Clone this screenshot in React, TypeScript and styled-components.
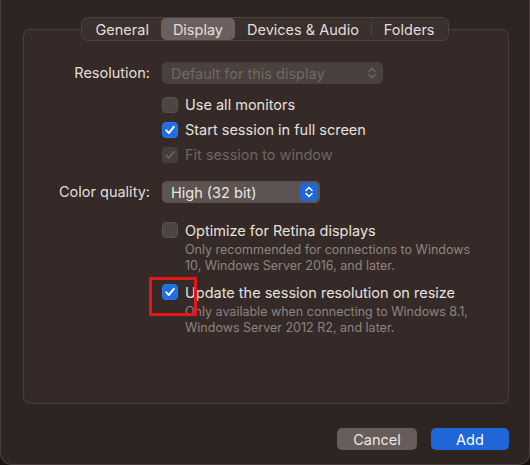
import React from "react";
import styled, { createGlobalStyle } from "styled-components";

const Global = createGlobalStyle`
  html, body { margin: 0; padding: 0; background: #1a1312; }
  body { font-family: Inter, "Noto Sans", sans-serif; -webkit-font-smoothing: antialiased; }
  #root { width: 530px; height: 465px; }
`;

const Window = styled.div`
  box-sizing: border-box;
  width: 530px;
  height: 465px;
  background: #2e2421;
  border: 1px solid #4a3f3c;
  border-top: none;
  border-radius: 0 0 12px 12px;
  padding: 17px 20px 14px 22px;
  display: flex;
  flex-direction: column;
`;

const Tabs = styled.div`
  align-self: center;
  position: relative;
  z-index: 1;
  display: flex;
  align-items: center;
  height: 24px;
  box-sizing: border-box;
  padding: 0 1px;
  background: #3a302d;
  border: 1px solid #4d4340;
  border-radius: 7px;
  margin-left: -2px;
`;

const Tab = styled.div<{ $active?: boolean }>`
  height: 22px;
  display: flex;
  align-items: center;
  padding: 0 12px;
  border-radius: 5px;
  font-size: 14.5px;
  color: #e4dedc;
  background: ${(p) => (p.$active ? "#6b605d" : "transparent")};
`;

const TabSep = styled.div`
  width: 1px;
  height: 14px;
  background: #4d4340;
`;

const Panel = styled.div`
  box-sizing: border-box;
  height: 375px;
  margin-top: -12px;
  background: #352a27;
  border: 1px solid #4a3f3c;
  border-radius: 7px;
  padding-top: 32px;
`;

const Form = styled.div`
  display: grid;
  grid-template-columns: 126px 1fr;
  column-gap: 12px;
  align-items: start;
`;

const Label = styled.div<{ $mt?: number }>`
  grid-column: 1;
  text-align: right;
  font-size: 14.5px;
  line-height: 22px;
  color: #e4dedc;
  margin-top: ${(p) => p.$mt ?? 0}px;
`;

const Control = styled.div<{ $mt?: number }>`
  grid-column: 2;
  margin-top: ${(p) => p.$mt ?? 0}px;
`;

const Popup = styled.div<{ $width: number; $disabled?: boolean }>`
  box-sizing: border-box;
  width: ${(p) => p.$width}px;
  height: 22px;
  border-radius: 5px;
  background: ${(p) => (p.$disabled ? "#4a403d" : "#5d5350")};
  color: ${(p) => (p.$disabled ? "#716865" : "#ebe6e4")};
  font-size: 14.5px;
  display: flex;
  align-items: center;
  justify-content: space-between;
  padding: 0 2px 0 9px;
`;

const Stepper = styled.div<{ $blue?: boolean }>`
  width: 18px;
  height: 18px;
  border-radius: 4px;
  background: ${(p) => (p.$blue ? "#1f66d9" : "transparent")};
  display: flex;
  align-items: center;
  justify-content: center;
`;

const CheckRow = styled.div<{ $disabled?: boolean }>`
  height: 25px;
  display: flex;
  align-items: center;
  gap: 7px;
  font-size: 14.5px;
  color: ${(p) => (p.$disabled ? "#6f6663" : "#e6e1df")};
`;

const OptionTitle = styled(CheckRow)`
  height: 20px;
`;

const Box = styled.div<{ $state: "off" | "on" | "dim" }>`
  position: relative;
  box-sizing: border-box;
  width: 16px;
  height: 16px;
  flex: none;
  border-radius: 4px;
  display: flex;
  align-items: center;
  justify-content: center;
  background: ${(p) =>
    p.$state === "on" ? "#1f6fe3" : p.$state === "dim" ? "#463c39" : "#4e4542"};
  border: 1px solid
    ${(p) => (p.$state === "on" ? "#2b78e8" : p.$state === "dim" ? "#4c423f" : "#5a504d")};
`;

const Desc = styled.div`
  margin-top: 2px;
  padding-left: 23px;
  font-size: 12.5px;
  line-height: 16px;
  color: #8e8481;
`;

const Highlight = styled.div`
  position: absolute;
  left: -14px;
  top: -8px;
  width: 48px;
  height: 39px;
  box-sizing: border-box;
  border: 3px solid #e3161c;
`;

const Footer = styled.div`
  margin-top: 24px;
  display: flex;
  justify-content: flex-end;
  gap: 14px;
`;

const Button = styled.div<{ $primary?: boolean; $width: number }>`
  width: ${(p) => p.$width}px;
  height: 22px;
  border-radius: 5px;
  display: flex;
  align-items: center;
  justify-content: center;
  font-size: 14.5px;
  color: ${(p) => (p.$primary ? "#ffffff" : "#ece7e5")};
  background: ${(p) => (p.$primary ? "#1f66d9" : "#675d5a")};
`;

const Chevrons = ({ color }: { color: string }) => (
  <svg width="10" height="14" viewBox="0 0 10 14">
    <path d="M2 5.5 L5 2.5 L8 5.5" fill="none" stroke={color} strokeWidth="1.5" strokeLinecap="round" strokeLinejoin="round" />
    <path d="M2 8.5 L5 11.5 L8 8.5" fill="none" stroke={color} strokeWidth="1.5" strokeLinecap="round" strokeLinejoin="round" />
  </svg>
);

const Check = ({ color }: { color: string }) => (
  <svg width="12" height="12" viewBox="0 0 12 12">
    <path d="M2.3 6.4 L4.9 9 L9.8 2.8" fill="none" stroke={color} strokeWidth="2" strokeLinecap="round" strokeLinejoin="round" />
  </svg>
);

const Checkbox = ({ state, children }: { state: "off" | "on" | "dim"; children?: React.ReactNode }) => (
  <Box $state={state}>
    {state === "on" && <Check color="#ffffff" />}
    {state === "dim" && <Check color="#6a615e" />}
    {children}
  </Box>
);

export default function App() {
  return (
    <>
      <Global />
      <Window>
        <Tabs>
          <Tab>General</Tab>
          <Tab $active>Display</Tab>
          <Tab>Devices &amp; Audio</Tab>
          <TabSep />
          <Tab>Folders</Tab>
        </Tabs>
        <Panel>
          <Form>
            <Label>Resolution:</Label>
            <Control>
              <Popup $width={221} $disabled>
                <span>Default for this display</span>
                <Stepper>
                  <Chevrons color="#6f6663" />
                </Stepper>
              </Popup>
            </Control>

            <Control $mt={8}>
              <CheckRow>
                <Checkbox state="off" />
                <span>Use all monitors</span>
              </CheckRow>
              <CheckRow>
                <Checkbox state="on" />
                <span>Start session in full screen</span>
              </CheckRow>
              <CheckRow $disabled>
                <Checkbox state="dim" />
                <span>Fit session to window</span>
              </CheckRow>
            </Control>

            <Label $mt={14}>Color quality:</Label>
            <Control $mt={14}>
              <Popup $width={158}>
                <span>High (32 bit)</span>
                <Stepper $blue>
                  <Chevrons color="#ffffff" />
                </Stepper>
              </Popup>
            </Control>

            <Control $mt={17}>
              <OptionTitle>
                <Checkbox state="off" />
                <span>Optimize for Retina displays</span>
              </OptionTitle>
              <Desc>
                Only recommended for connections to Windows
                <br />
                10, Windows Server 2016, and later.
              </Desc>
            </Control>

            <Control $mt={8}>
              <OptionTitle>
                <Checkbox state="on">
                  <Highlight />
                </Checkbox>
                <span>Update the session resolution on resize</span>
              </OptionTitle>
              <Desc>
                Only available when connecting to Windows 8.1,
                <br />
                Windows Server 2012 R2, and later.
              </Desc>
            </Control>
          </Form>
        </Panel>
        <Footer>
          <Button $width={80}>Cancel</Button>
          <Button $width={78} $primary>
            Add
          </Button>
        </Footer>
      </Window>
    </>
  );
}
